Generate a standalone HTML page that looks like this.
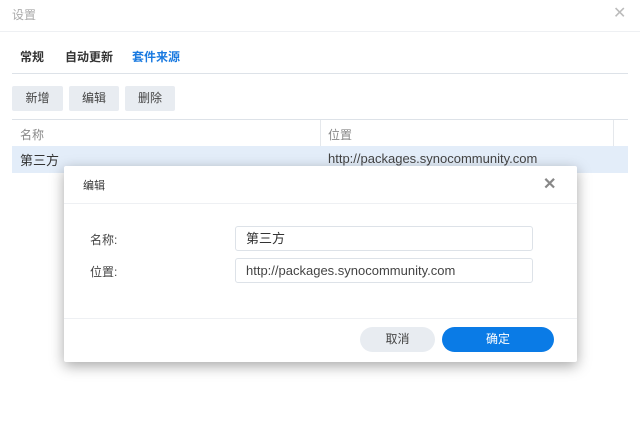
<!DOCTYPE html>
<html><head><meta charset="utf-8"><style>
*{margin:0;padding:0;box-sizing:border-box}
body{width:640px;height:440px;background:#fff;font-family:"Liberation Sans","Noto Sans CJK SC",sans-serif;font-size:12px;color:#333;position:relative;overflow:hidden}
.a{position:absolute}
.btn{position:absolute;top:86px;height:25px;background:#e8ecf1;border-radius:2px;font-size:12px;color:#444;text-align:center;line-height:25px}
</style></head><body>
<div class="a" style="left:12px;top:6px;color:#aaa;font-size:12px">设置</div>
<div class="a" style="left:613px;top:3px;color:#bbb;font-size:16px">✕</div>
<div class="a" style="left:0;top:31px;width:640px;height:1px;background:#eef0f3"></div>
<div class="a" style="left:20px;top:48px;font-weight:bold;color:#333">常规</div>
<div class="a" style="left:65px;top:48px;font-weight:bold;color:#333">自动更新</div>
<div class="a" style="left:132px;top:48px;font-weight:bold;color:#1a7ae0">套件来源</div>
<div class="a" style="left:12px;top:73px;width:616px;height:1px;background:#dde2e8"></div>
<div class="btn" style="left:12px;width:51px">新增</div>
<div class="btn" style="left:69px;width:50px">编辑</div>
<div class="btn" style="left:125px;width:50px">删除</div>
<div class="a" style="left:12px;top:119px;width:616px;height:1px;background:#dde2e8"></div>
<div class="a" style="left:20px;top:126px;color:#888">名称</div>
<div class="a" style="left:320px;top:120px;width:1px;height:26px;background:#e5e8ec"></div>
<div class="a" style="left:613px;top:120px;width:1px;height:26px;background:#e5e8ec"></div>
<div class="a" style="left:328px;top:126px;color:#888">位置</div>
<div class="a" style="left:12px;top:146px;width:616px;height:27px;background:#e3edf9"></div>
<div class="a" style="left:20px;top:150px;color:#333;font-size:13px">第三方</div>
<div class="a" style="left:328px;top:151px;color:#444;font-size:13px">http://packages.synocommunity.com</div>
<div class="a" style="left:64px;top:166px;width:513px;height:196px;background:#fff;box-shadow:0 4px 14px rgba(0,0,0,.35);border-radius:2px">
 <div class="a" style="left:19px;top:11px;font-size:11px;color:#333">编辑</div>
 <div class="a" style="left:479px;top:8px;font-size:16px;color:#888;font-weight:bold">✕</div>
 <div class="a" style="left:0;top:37px;width:513px;height:1px;background:#eef0f3"></div>
 <div class="a" style="left:26px;top:65px;color:#444">名称:</div>
 <div class="a" style="left:26px;top:97px;color:#444">位置:</div>
 <div class="a" style="left:171px;top:60px;width:298px;height:25px;border:1px solid #dde2e8;border-radius:3px;padding-left:10px;line-height:23px;font-size:13px;color:#333">第三方</div>
 <div class="a" style="left:171px;top:92px;width:298px;height:25px;border:1px solid #dde2e8;border-radius:3px;padding-left:10px;line-height:23px;font-size:13px;color:#444">http://packages.synocommunity.com</div>
 <div class="a" style="left:0;top:152px;width:513px;height:1px;background:#eef0f3"></div>
 <div class="a" style="left:296px;top:161px;width:75px;height:25px;border-radius:13px;background:#e8ecf1;text-align:center;line-height:25px;color:#444">取消</div>
 <div class="a" style="left:378px;top:161px;width:112px;height:25px;border-radius:13px;background:#0a7be6;text-align:center;line-height:25px;color:#fff">确定</div>
</div>
</body></html>
